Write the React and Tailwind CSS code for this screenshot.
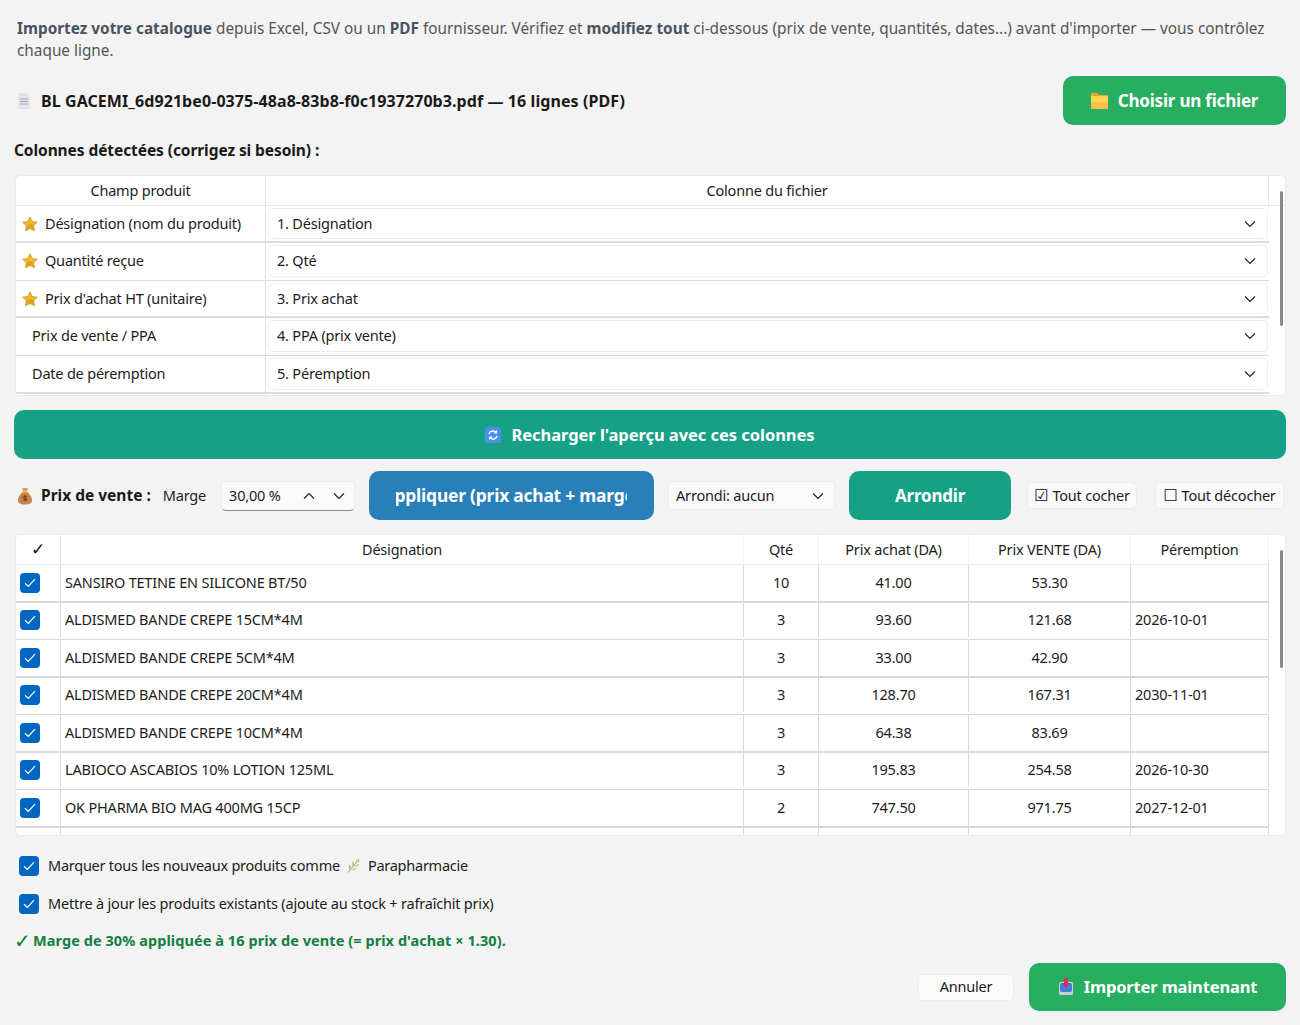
import React from "react";

const Chevron = ({ className = "" }) => (
  <svg width="12" height="8" viewBox="0 0 12 8" className={className} fill="none">
    <path d="M1 1.5 L6 6.5 L11 1.5" stroke="#222" strokeWidth="1.2" />
  </svg>
);

const Star = () => (
  <svg width="16" height="16" viewBox="0 0 16 16" className="shrink-0">
    <path d="M8 .8l2.2 4.7 5.1.7-3.7 3.5.9 5.1L8 12.4l-4.5 2.4.9-5.1L.7 6.2l5.1-.7z" fill="#f2b824" stroke="#c98f1a" strokeWidth=".7" strokeLinejoin="round" />
    <path d="M8 12.400l-4.500 2.400.9-5.100L8 8l3.600 1.700.9 5.100z" fill="#dfa11f" />
  </svg>
);

const Check = () => (
  <span className="flex h-[20px] w-[20px] shrink-0 items-center justify-center rounded-[4px] bg-[#0067c0]">
    <svg width="12" height="10" viewBox="0 0 12 10" fill="none">
      <path d="M1 5.2 L4.3 8.4 L11 1.2" stroke="#fff" strokeWidth="1.2" />
    </svg>
  </span>
);

const Folder = () => (
  <svg width="17" height="16" viewBox="0 0 17 16" className="shrink-0">
    <path d="M0 1a1 1 0 0 1 1-1h5l2 2h8a1 1 0 0 1 1 1v3H0z" fill="#eda92c" />
    <rect x="0" y="3" width="17" height="13" rx="1" fill="#ffd451" />
    <rect x="0" y="9" width="17" height="7" rx="1" fill="#fbbf4d" />
  </svg>
);

const Doc = () => (
  <svg width="12" height="16" viewBox="0 0 12 16" className="shrink-0">
    <path d="M0 1a1 1 0 0 1 1-1h7l4 4v11a1 1 0 0 1-1 1H1a1 1 0 0 1-1-1z" fill="#e6e0ee" />
    <path d="M2 6h8M2 8.5h8M2 11h8" stroke="#a9a6b3" strokeWidth="1" />
  </svg>
);

const Refresh = () => (
  <svg width="16" height="16" viewBox="0 0 16 16" className="shrink-0">
    <rect width="16" height="16" rx="2" fill="#4a90e8" />
    <path d="M4 7a4 4 0 0 1 7-1.5M12 9a4 4 0 0 1-7 1.500" fill="none" stroke="#fff" strokeWidth="1.5" />
    <path d="M12 3v3.500H8.500zM4 13V9.500h3.500z" fill="#fff" />
  </svg>
);

const Bag = () => (
  <svg width="16" height="18" viewBox="0 0 16 18" className="shrink-0">
    <path d="M5 1h6L9.800 5h-3.600z" fill="#d9a066" />
    <path d="M6 5h4c3 2 5 5 5 8 0 3-2 4.500-7 4.500S1 16 1 13c0-3 2-6 5-8z" fill="#c9824a" />
    <rect x="5.500" y="4" width="5" height="1.500" fill="#f0c040" />
    <path d="M8 8v6" stroke="#7a3f18" strokeWidth="1.400" />
    <path d="M10 9.500H7a1 1 0 0 0 0 2h2a1 1 0 0 1 0 2H6" fill="none" stroke="#7a3f18" strokeWidth=".9" />
  </svg>
);

const Herb = () => (
  <svg width="14" height="15" viewBox="0 0 14 15" className="shrink-0">
    <path d="M1 14.500 C4 11 8 6 12 1" stroke="#8aa85c" strokeWidth="1" fill="none" />
    <path d="M3 12 C1.500 10 1.500 8 2.500 6.500 C4 8 4.500 10 3 12z M6 8.500 C5 7 5 5 6 3 C7.500 4.500 7.500 7 6 8.500z M9 5 C9 3.500 9.500 2 10.500 1 C11 2.500 10.500 4 9 5z" fill="#a4c574" />
    <path d="M4.500 12 C6.500 12.500 8.500 12 10 10.500 C8 9.800 6 10.300 4.500 12z M7.500 8.500 C9.500 8.800 11.500 8 12.500 6.500 C10.500 6 8.500 6.800 7.500 8.500z M10 4.500 C11.500 4.500 13 3.800 13.500 2.500 C12 2.500 10.800 3.200 10 4.500z" fill="#b6d387" />
  </svg>
);

const Inbox = () => (
  <svg width="16" height="18" viewBox="0 0 16 18" className="shrink-0">
    <rect x="1" y="4" width="14" height="13" rx="1.500" fill="#c8cdd8" />
    <rect x="2" y="5" width="12" height="9" rx="2" fill="#3f7fd8" />
    <path d="M6 0h4v5h2.500L8 10 3.500 5H6z" fill="#d1315c" />
  </svg>
);

const mapRows = [
  { star: true, label: "Désignation (nom du produit)", val: "1. Désignation", h: "h-[37px]", b: "border-b-2" },
  { star: true, label: "Quantité reçue", val: "2. Qté", h: "h-[38px] pb-px", b: "border-b" },
  { star: true, label: "Prix d'achat HT (unitaire)", val: "3. Prix achat", h: "h-[37px]", b: "border-b-2" },
  { label: "Prix de vente / PPA", val: "4. PPA (prix vente)", h: "h-[38px] pb-px", b: "border-b" },
  { label: "Date de péremption", val: "5. Péremption", h: "h-[38px]", b: "border-b-2" },
];

const items = [
  ["SANSIRO TETINE EN SILICONE BT/50", "10", "41.00", "53.30", "", "h-[38px]", "border-b-2"],
  ["ALDISMED BANDE CREPE 15CM*4M", "3", "93.60", "121.68", "2026-10-01", "h-[37px] pb-[2px]", "border-b"],
  ["ALDISMED BANDE CREPE 5CM*4M", "3", "33.00", "42.90", "", "h-[38px]", "border-b-2"],
  ["ALDISMED BANDE CREPE 20CM*4M", "3", "128.70", "167.31", "2030-11-01", "h-[37px] pb-[2px]", "border-b"],
  ["ALDISMED BANDE CREPE 10CM*4M", "3", "64.38", "83.69", "", "h-[38px]", "border-b-2"],
  ["LABIOCO ASCABIOS 10% LOTION 125ML", "3", "195.83", "254.58", "2026-10-30", "h-[37px] pb-[2px]", "border-b"],
  ["OK PHARMA BIO MAG 400MG 15CP", "2", "747.50", "971.75", "2027-12-01", "h-[38px]", "border-b-2"],
];

const greenBtn = "flex items-center justify-center rounded-[10px] text-white font-bold";

export default function App() {
  return (
    <div className="h-[1025px] w-[1300px] overflow-hidden bg-[#f3f3f3] px-[14px] text-[14.5px] text-[#1c1c1c] [font-family:'Noto_Sans',sans-serif] tracking-[-0.2px]">
      <p className="ml-[3px] pt-[17px] text-[#555] leading-[22px] text-[15.35px] tracking-normal">
        <b className="font-bold text-[#4a5360]">Importez votre catalogue</b> depuis Excel, CSV ou un <b className="font-bold text-[#4a5360]">PDF</b> fournisseur. Vérifiez et <b className="font-bold text-[#4a5360]">modifiez tout</b> ci-dessous (prix de vente, quantités, dates...) avant d'importer — vous contrôlez chaque ligne.
      </p>

      <div className="mt-[15px] flex h-[49px] items-center justify-between">
        <div className="ml-[4px] flex items-center gap-[11px] font-bold text-[16px] tracking-[0.08px] text-[#1a1a1a]">
          <Doc />
          <span>BL GACEMI_6d921be0-0375-48a8-83b8-f0c1937270b3.pdf — 16 lignes (PDF)</span>
        </div>
        <button className={`${greenBtn} h-[49px] w-[223px] gap-[10px] bg-[#27ae60] text-[17px] tracking-[-0.2px]`}>
          <Folder />
          Choisir un fichier
        </button>
      </div>

      <div className="mt-[14px] h-[22px] text-[15.5px] tracking-[-0.08px] font-bold leading-[22px] text-[#1a1a1a]">Colonnes détectées (corrigez si besoin) :</div>

      <div className="relative mt-[14px] ml-px h-[221px] w-[1271px] overflow-hidden rounded-[5px] border border-[#ebebeb] bg-white">
        <div className="grid h-[30px] grid-cols-[250px_1003px] border-b border-[#e6e6e6] leading-[29px] text-center">
          <div className="border-r border-[#e6e6e6]">Champ produit</div>
          <div className="border-r border-[#e6e6e6]">Colonne du fichier</div>
        </div>
        {mapRows.map((r) => (
          <div key={r.label} className={`grid w-[1253px] grid-cols-[250px_1003px] ${r.h} ${r.b} border-[#dcdcdc]`}>
            <div className={`flex items-center gap-[7px] border-r border-[#dcdcdc] ${r.star ? "pl-[6px]" : "pl-[16px]"}`}>
              {r.star && <Star />}
              <span>{r.label}</span>
            </div>
            <div className="py-[2px] pl-[2px] pr-px">
              <div className="flex h-full items-center justify-between rounded-[5px] border border-[#eeeeee] bg-white pl-[8px] pr-[11px]">
                <span>{r.val}</span>
                <Chevron />
              </div>
            </div>
          </div>
        ))}
        <div className="grid w-[1253px] grid-cols-[250px_1003px]"><div className="h-[4px] border-r border-[#dcdcdc]" /></div>
        <div className="absolute right-[2px] top-[15px] h-[135px] w-[3px] rounded bg-[#8a8a8a]" />
      </div>

      <button className={`${greenBtn} mt-[14px] h-[49px] w-full gap-[10px] bg-[#16a085] pt-px text-[16.5px] tracking-[-0.05px]`}>
        <Refresh />
        Recharger l'aperçu avec ces colonnes
      </button>

      <div className="mt-[12px] flex h-[49px] items-center">
        <span className="ml-[3px] flex items-center gap-[8px] font-bold text-[#1a1a1a] text-[15.5px] tracking-normal">
          <Bag /> Prix de vente :
        </span>
        <span className="ml-[12px]">Marge</span>
        <div className="ml-[15px] flex h-[30px] w-[134px] items-center justify-between rounded-[5px] border border-[#ececec] border-b-[#8a8a8a] bg-[#fafafa] pl-[7px] pr-[9px]">
          <span>30,00 %</span>
          <span className="flex items-center gap-[18px]">
            <Chevron className="rotate-180" />
            <Chevron />
          </span>
        </div>
        <button className="ml-[14px] flex h-[49px] w-[285px] items-center justify-center rounded-[10px] bg-[#2980b9] px-[27px] text-[17.4px] font-bold text-white">
          <span className="flex w-full justify-center overflow-hidden whitespace-nowrap">Appliquer (prix achat + marge)</span>
        </button>
        <div className="ml-[14px] flex h-[29px] w-[167px] items-center justify-between rounded-[5px] border border-[#ececec] bg-[#fafafa] pl-[7px] pr-[10px]">
          <span>Arrondi: aucun</span>
          <Chevron />
        </div>
        <button className={`${greenBtn} ml-[14px] h-[49px] w-[162px] bg-[#16a085] text-[17px]`}>Arrondir</button>
        <div className="ml-[16px] flex h-[27px] w-[110px] items-center justify-center gap-[4px] rounded-[5px] border border-[#ececec] bg-[#fafafa]">
          <span className="text-[16px] leading-none text-[#111] [font-family:'DejaVu_Sans',sans-serif]">☑</span> Tout cocher
        </div>
        <div className="ml-[18px] flex h-[27px] w-[129px] items-center justify-center gap-[4px] rounded-[5px] border border-[#ececec] bg-[#fafafa]">
          <span className="text-[16px] leading-none text-[#111] [font-family:'DejaVu_Sans',sans-serif]">☐</span> Tout décocher
        </div>
      </div>

      <div className="relative mt-[14px] ml-px h-[302px] w-[1271px] overflow-hidden rounded-[5px] border border-[#ebebeb] bg-white">
        <div className="grid h-[30px] w-[1253px] grid-cols-[45px_683px_75px_150px_162px_138px] border-b border-[#e8e8e8] text-center leading-[29px]">
          <div className="border-r border-[#e8e8e8] text-[17px] font-bold text-[#111] [font-family:'DejaVu_Sans',sans-serif]">✓</div>
          <div className="border-r border-[#f0f0f0]">Désignation</div>
          <div className="border-r border-[#f0f0f0]">Qté</div>
          <div className="border-r border-[#f0f0f0]">Prix achat (DA)</div>
          <div className="border-r border-[#f0f0f0]">Prix VENTE (DA)</div>
          <div className="border-r border-[#f0f0f0]">Péremption</div>
        </div>
        {items.map((r) => (
          <div key={r[0]} className={`grid w-[1253px] grid-cols-[45px_683px_75px_150px_162px_138px] ${r[5]} ${r[6]} border-[#d9d9d9] text-center`}>
            <div className="flex items-center border-r border-[#d9d9d9] pl-[4px]"><Check /></div>
            <div className="flex items-center border-r border-[#d9d9d9] pl-[4px] text-left">{r[0]}</div>
            <div className="flex items-center justify-center border-r border-[#d9d9d9]">{r[1]}</div>
            <div className="flex items-center justify-center border-r border-[#d9d9d9]">{r[2]}</div>
            <div className="flex items-center justify-center border-r border-[#d9d9d9]">{r[3]}</div>
            <div className="flex items-center border-r border-[#d9d9d9] pl-[4px]">{r[4]}</div>
          </div>
        ))}
        <div className="grid h-[8px] w-[1253px] grid-cols-[45px_683px_75px_150px_162px_138px]">
          <div className="border-r border-[#d9d9d9]" />
          <div className="border-r border-[#d9d9d9]" />
          <div className="border-r border-[#d9d9d9]" />
          <div className="border-r border-[#d9d9d9]" />
          <div className="border-r border-[#d9d9d9]" />
          <div className="border-r border-[#d9d9d9]" />
        </div>
        <div className="absolute right-[2px] top-[15px] h-[118px] w-[3px] rounded bg-[#8a8a8a]" />
      </div>

      <div className="mt-[19px] ml-[5px] flex h-[21px] items-center gap-[9px]">
        <Check />
        <span className="flex items-center gap-[7px] tracking-[-0.25px]">Marquer tous les nouveaux produits comme <Herb /> Parapharmacie</span>
      </div>
      <div className="mt-[17px] ml-[5px] flex h-[21px] items-center gap-[9px]">
        <Check />
        <span>Mettre à jour les produits existants (ajoute au stock + rafraîchit prix)</span>
      </div>
      <div className="mt-[16px] flex h-[22px] items-center gap-[5px] font-bold tracking-[0.07px] text-[#128040]">
        <span className="w-[14px] text-[20px] leading-none [font-family:'DejaVu_Sans',sans-serif]">✓</span>
        <span>Marge de 30% appliquée à 16 prix de vente (= prix d'achat × 1.30).</span>
      </div>

      <div className="mt-[11px] flex h-[48px] items-center justify-end">
        <button className="flex h-[27px] w-[96px] items-center justify-center rounded-[5px] border border-[#ececec] bg-[#fafafa]">Annuler</button>
        <button className={`${greenBtn} ml-[15px] h-[48px] w-[257px] gap-[10px] bg-[#27ae60] text-[16.5px] tracking-[-0.15px]`}>
          <Inbox />
          Importer maintenant
        </button>
      </div>
    </div>
  );
}
